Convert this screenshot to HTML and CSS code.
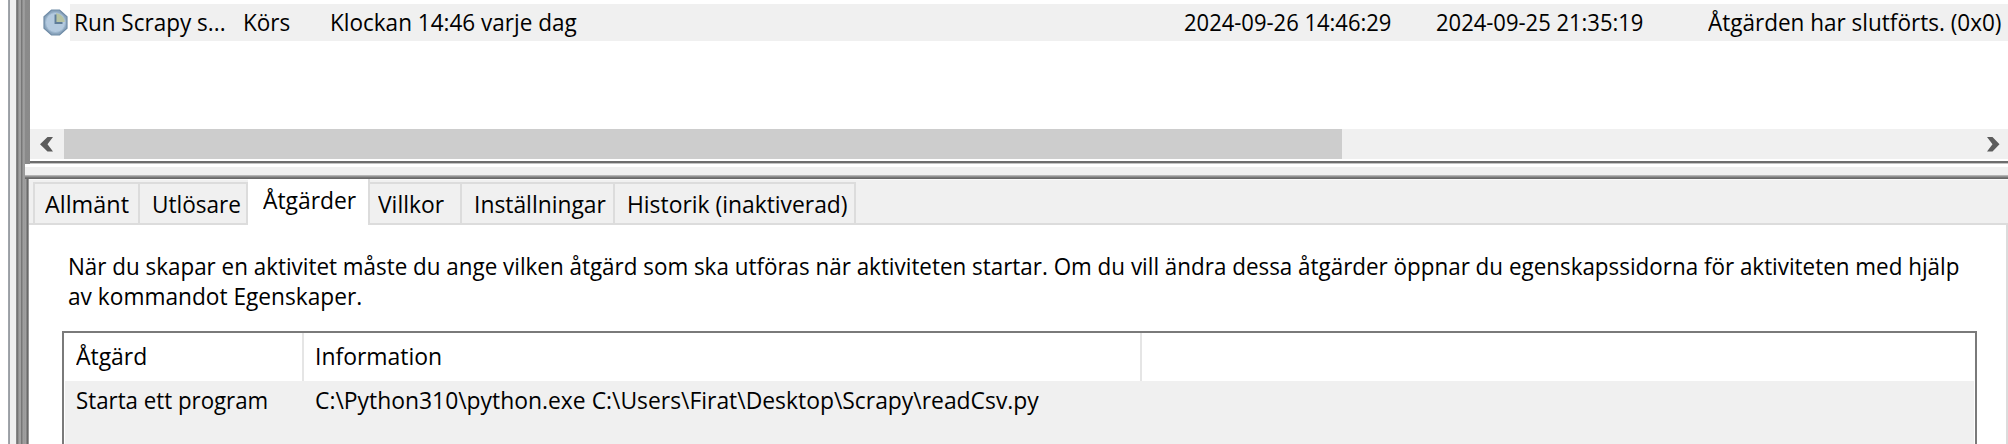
FILE: index.html
```
<!DOCTYPE html>
<html lang="sv">
<head>
<meta charset="utf-8">
<title>Schemaläggaren</title>
<link rel="stylesheet" href="styles.css">
</head>
<body>
<div class="window">
  <div class="edge"></div>
  <div class="main">
    <section class="tasks">
      <div class="task-row">
        <svg class="clock" viewBox="0 0 27 27" width="27" height="27">
          <path d="M9.500 1h8l7.500 6.800v11.400L17.500 26h-8L2 19.200V7.800z" fill="#8ba5bd" stroke="#6f8ba6" stroke-width="1.200"/>
          <circle cx="13.500" cy="13.500" r="10" fill="#b4cadf" stroke="#9fb9d1" stroke-width="1"/>
          <path d="M14 13V4.200a9.500 9.500 0 0 1 8.800 8.800z" fill="#b7c4a4"/>
          <path d="M13.500 5.500v8.500h7" fill="none" stroke="#5f7d99" stroke-width="1.900"/>
        </svg>
        <div class="cells">
          <span class="name"><span class="t n">Run Scrapy s...</span></span>
          <span class="status"><span class="t n">Körs</span></span>
          <span class="trigger"><span class="t n">Klockan 14:46 varje dag</span></span>
          <span class="date"><span class="t d">2024-09-26 14:46:29</span></span>
          <span class="date last"><span class="t d">2024-09-25 21:35:19</span></span>
          <span class="result"><span class="t n">Åtgärden har slutförts. (0x0)</span></span>
        </div>
      </div>
      <div class="scrollbar">
        <svg class="arrow" viewBox="0 0 34 30" width="34" height="30"><path d="M17.500 8H23l-5.500 7.300L23 22.500h-5.500L10 15.300z" fill="#5c5c5c"/></svg>
        <div class="thumb"></div>
        <svg class="arrow" viewBox="0 0 34 30" width="34" height="30"><path d="M14 8h5.500l7 7.300-7 7.200H14l5.500-7.200z" fill="#5c5c5c"/></svg>
      </div>
    </section>
    <div class="splitter"></div>
    <section class="details">
      <div class="tabs">
        <div class="tab allmant"><span class="t">Allmänt</span></div>
        <div class="tab utlosare"><span class="t">Utlösare</span></div>
        <div class="tab active"><span class="t">Åtgärder</span></div>
        <div class="tab villkor"><span class="t">Villkor</span></div>
        <div class="tab installningar"><span class="t">Inställningar</span></div>
        <div class="tab historik"><span class="t">Historik (inaktiverad)</span></div>
      </div>
      <div class="page">
        <p class="line"><span class="t p1">När du skapar en aktivitet måste du ange vilken åtgärd som ska utföras när aktiviteten startar. Om du vill ändra dessa åtgärder öppnar du egenskapssidorna för aktiviteten med hjälp</span></p>
        <p class="line"><span class="t p2">av kommandot Egenskaper.</span></p>
        <div class="table">
          <div class="tr head">
            <span class="c1"><span class="t w">Åtgärd</span></span>
            <span class="c2"><span class="t w">Information</span></span>
          </div>
          <div class="tr body">
            <span class="c1"><span class="t s">Starta ett program</span></span>
            <span class="c2"><span class="t c">C:\Python310\python.exe C:\Users\Firat\Desktop\Scrapy\readCsv.py</span></span>
          </div>
        </div>
      </div>
    </section>
  </div>
</div>
</body>
</html>
```
FILE: styles.css
```
* { box-sizing: border-box; }
body {
  margin: 0;
  background: #fff;
  color: #000;
  font: 24px/30px "Open Sans", "Noto Sans", sans-serif;
  overflow: hidden;
}
.window { display: flex; width: 2008px; height: 444px; overflow: hidden; }
.edge {
  flex: none;
  width: 25px;
  background: linear-gradient(90deg,
    #fff 8px, #b4b8bd 8px, #8d9298 9px, #a8abb0 10px, #f0f0f0 10px, #f0f0f0 16px,
    #a0a0a0 16px, #6e6e6e 17px, #7d7d7d 18px, #a2a2a2 19px, #a0a0a0 21px,
    #777 21px, #777 22px, #a0a0a0 23px, #999 25px);
}
.main { flex: 1; min-width: 0; display: flex; flex-direction: column; }

/* Narrow the face to UI text proportions */
.t {
  display: inline-block;
  white-space: nowrap;
  transform-origin: 0 50%;
  transform: scaleX(var(--sx, 0.952));
}
.n { --sx: 0.938; }
.d { --sx: 0.916; }
.p1 { --sx: 0.9335; }
.p2 { --sx: 0.945; }
.w { --sx: 0.955; }
.s { --sx: 0.928; }
.c { --sx: 0.953; }

.tasks {
  height: 164px;
  border-left: 5px solid #696969;
  border-image: linear-gradient(90deg, #8a8a8a 0, #a0a0a0 40%, #696969 60%) 0 0 0 5;
  display: flex;
  flex-direction: column;
  justify-content: space-between;
  padding: 4px 0 5px;
  box-shadow: inset 0 -1px #c4c4c4, inset 0 -3px #6d6d6d;
}
.task-row { display: flex; height: 37px; padding-left: 12px; }
.clock { flex: none; margin-top: 5px; width: 27px; }
.cells {
  flex: 1;
  margin-left: 1px;
  padding: 3px 0 0 4px;
  background: #f0f0f0;
  display: flex;
}
.cells > span { flex: none; }
.name { width: 169px; }
.status { width: 87px; }
.trigger { width: 854px; }
.date { width: 252px; }
.last { width: 272px; }
.result { width: 290px; }

.scrollbar {
  display: flex;
  height: 30px;
  background: #f0f0f0;
}
.arrow { flex: none; }
.thumb { width: 1278px; background: #cdcdcd; }
.scrollbar .arrow:last-child { margin-left: auto; margin-right: 1px; }

.splitter {
  height: 12px;
  background: linear-gradient(#fff 3px, #f0f0f0 3px, #f0f0f0 11px, #b4b4b4 11px);
}
.details {
  flex: 1;
  border-top: 3px solid #696969;
  border-image: linear-gradient(#a0a0a0 0, #696969 2px) 3 0 0 0;
  background: linear-gradient(90deg, #a0a0a0 1px, #696969 2px, #696969 3px, #c8c8c8 4px, #fff 4px);
  padding-left: 4px;
}
.tabs {
  height: 46px;
  padding-left: 4px;
  display: flex;
  align-items: flex-end;
  background: #f0f0f0;
  box-shadow: inset 0 -2px #dcdcdc, inset 0 1px #fafafa;
}
.tab {
  flex: none;
  height: 43px;
  border: 2px solid #dcdcdc;
  border-left-width: 0;
  padding-top: 5px;
}
.allmant { width: 107px; border-left-width: 2px; padding-left: 10px; --sx: .975; }
.utlosare { width: 108px; padding-left: 12px; --sx: .94; }
.active {
  width: 122px;
  height: 46px;
  border: 0;
  border-right: 2px solid #dcdcdc;
  background: #fff;
  padding: 6px 0 0 15px;
}
.villkor { width: 92px; padding-left: 8px; }
.installningar { width: 153px; padding-left: 12px; }
.historik { width: 241px; padding-left: 12px; }

.page {
  height: 219px;
  padding: 26px 29px 0 33px;
  border-right: 2px solid #dcdcdc;
  background: #fff;
}
.line { margin: 0; padding-left: 6px; height: 30px; white-space: nowrap; }
.table {
  margin-top: 20px;
  height: 120px;
  border: 2px solid #7a7a7a;
  padding: 0 1px;
}
.tr { display: flex; }
.tr > span { flex: none; }
.head { height: 48px; }
.c1 { width: 239px; padding-left: 11px; }
.c2 { width: 838px; padding-left: 11px; }
.head > span { padding-top: 8px; border-right: 2px solid #e5e5e5; }
.body { height: 72px; background: #f0f0f0; padding-top: 4px; }
```
